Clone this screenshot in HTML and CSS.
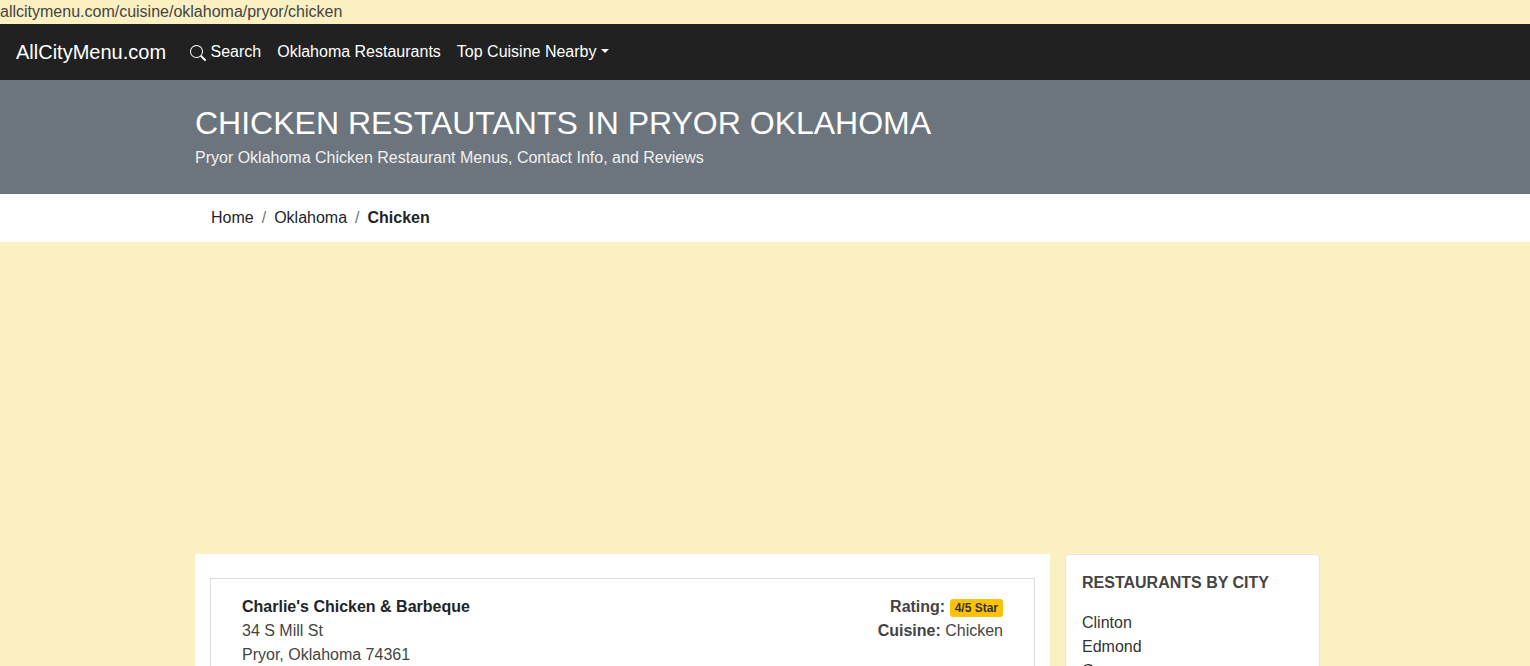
FILE: index.html
```html
<!DOCTYPE html>
<html lang="en">
<head>
    <meta charset="UTF-8">
    <meta name="viewport" content="width=device-width, initial-scale=1.0">
    <title>Chicken Restaurants in Pryor Oklahoma</title>
    <link rel="stylesheet" href="styles.css">
</head>
<body>

    <div class="url-line">allcitymenu.com/cuisine/oklahoma/pryor/chicken</div>

    <!-- Top Navigation -->
    <nav class="navbar">
        <a class="brand" href="#">AllCityMenu.com</a>
        <a class="nav-link" href="#">
            <svg class="search-icon" width="16" height="16" viewBox="0 0 16 16" fill="currentColor">
                <path d="M11.742 10.344a6.5 6.5 0 1 0-1.397 1.398h-.001c.03.04.062.078.098.115l3.85 3.85a1 1 0 0 0 1.415-1.414l-3.85-3.85a1.007 1.007 0 0 0-.115-.1zM12 6.5a5.5 5.5 0 1 1-11 0 5.5 5.5 0 0 1 11 0z"/>
            </svg>
            Search
        </a>
        <a class="nav-link" href="#">Oklahoma Restaurants</a>
        <a class="nav-link dropdown-toggle" href="#">Top Cuisine Nearby</a>
    </nav>

    <!-- Page Header -->
    <header class="page-header">
        <div class="container">
            <h1>CHICKEN RESTAUTANTS IN PRYOR OKLAHOMA</h1>
            <p>Pryor Oklahoma Chicken Restaurant Menus, Contact Info, and Reviews</p>
        </div>
    </header>

    <!-- Breadcrumb -->
    <div class="breadcrumb-bar">
        <ol class="breadcrumb container">
            <li><a href="#">Home</a></li>
            <li><a href="#">Oklahoma</a></li>
            <li class="active">Chicken</li>
        </ol>
    </div>

    <!-- Empty ad slot -->
    <div class="ad-slot"></div>

    <div class="container content-row">
        <main class="listing-panel">
            <div class="listing">
                <div class="listing-info">
                    <strong class="listing-name">Charlie's Chicken &amp; Barbeque</strong><br>
                    34 S Mill St<br>
                    Pryor, Oklahoma 74361
                </div>
                <div class="listing-meta">
                    <strong>Rating:</strong> <span class="badge">4/5 Star</span><br>
                    <strong>Cuisine:</strong> Chicken
                </div>
            </div>
        </main>

        <aside class="city-card">
            <h2>RESTAURANTS BY CITY</h2>
            <ul class="city-list">
                <li><a href="#">Clinton</a></li>
                <li><a href="#">Edmond</a></li>
                <li><a href="#">Grove</a></li>
            </ul>
        </aside>
    </div>

</body>
</html>
```

FILE: styles.css
```css
body {
    margin: 0;
    font-family: "Liberation Sans", Arial, sans-serif;
    font-size: 16px;
    line-height: 24px;
    background-color: #faf0c2;
    color: #444;
}

a {
    color: inherit;
    text-decoration: none;
}

.container {
    width: 1140px;
    margin: 0 auto;
}

.url-line {
    height: 24px;
}

.navbar {
    display: flex;
    align-items: center;
    height: 56px;
    padding: 0 16px;
    background-color: #212121;
    color: #fff;
}

.brand {
    font-size: 20px;
    line-height: 30px;
    margin-right: 16px;
}

.nav-link {
    padding: 0 8px;
}

.search-icon {
    vertical-align: -4px;
}

.dropdown-toggle::after {
    content: "";
    display: inline-block;
    margin-left: 5px;
    vertical-align: 4px;
    border-top: 4.8px solid;
    border-left: 4.8px solid transparent;
    border-right: 4.8px solid transparent;
}

.page-header {
    height: 114px;
    padding-top: 24px;
    box-sizing: border-box;
    background-color: #6c757d;
    color: #fff;
}

.page-header h1 {
    margin: 0;
    font-size: 32px;
    font-weight: 400;
    line-height: 38px;
}

.page-header p {
    margin: 4px 0 0;
    color: #f1f1f1;
}

.breadcrumb-bar {
    height: 48px;
    background-color: #fff;
    color: #212529;
}

.breadcrumb {
    display: flex;
    box-sizing: border-box;
    list-style: none;
    margin: 0 auto;
    padding: 12px 16px;
}

.breadcrumb li + li::before {
    content: "/";
    padding: 0 8px;
    font-weight: 400;
    color: #6c757d;
}

.breadcrumb .active {
    font-weight: 700;
}

.ad-slot {
    height: 312px;
}

.content-row {
    display: flex;
    align-items: flex-start;
}

.listing-panel {
    width: 855px;
    padding: 24px 15px;
    box-sizing: border-box;
    background-color: #fff;
}

.listing {
    display: flex;
    justify-content: space-between;
    padding: 16px 31px;
    border: 1px solid #ddd;
}

.listing-name {
    color: #212529;
}

.listing-meta {
    text-align: right;
}

.badge {
    display: inline-block;
    padding: 3px 5px;
    font-size: 12px;
    font-weight: 700;
    line-height: 12px;
    color: #333;
    background-color: #ffc107;
    border-radius: 3px;
}

.city-card {
    width: 255px;
    margin-left: 15px;
    padding: 16px;
    box-sizing: border-box;
    background-color: #fff;
    border: 1px solid #e4e4e4;
    border-radius: 4px;
}

.city-card h2 {
    margin: 0 0 16px;
    font-size: 16px;
    font-weight: 700;
    line-height: 24px;
}

.city-list {
    list-style: none;
    margin: 0;
    padding: 0;
    color: #333;
}
```
